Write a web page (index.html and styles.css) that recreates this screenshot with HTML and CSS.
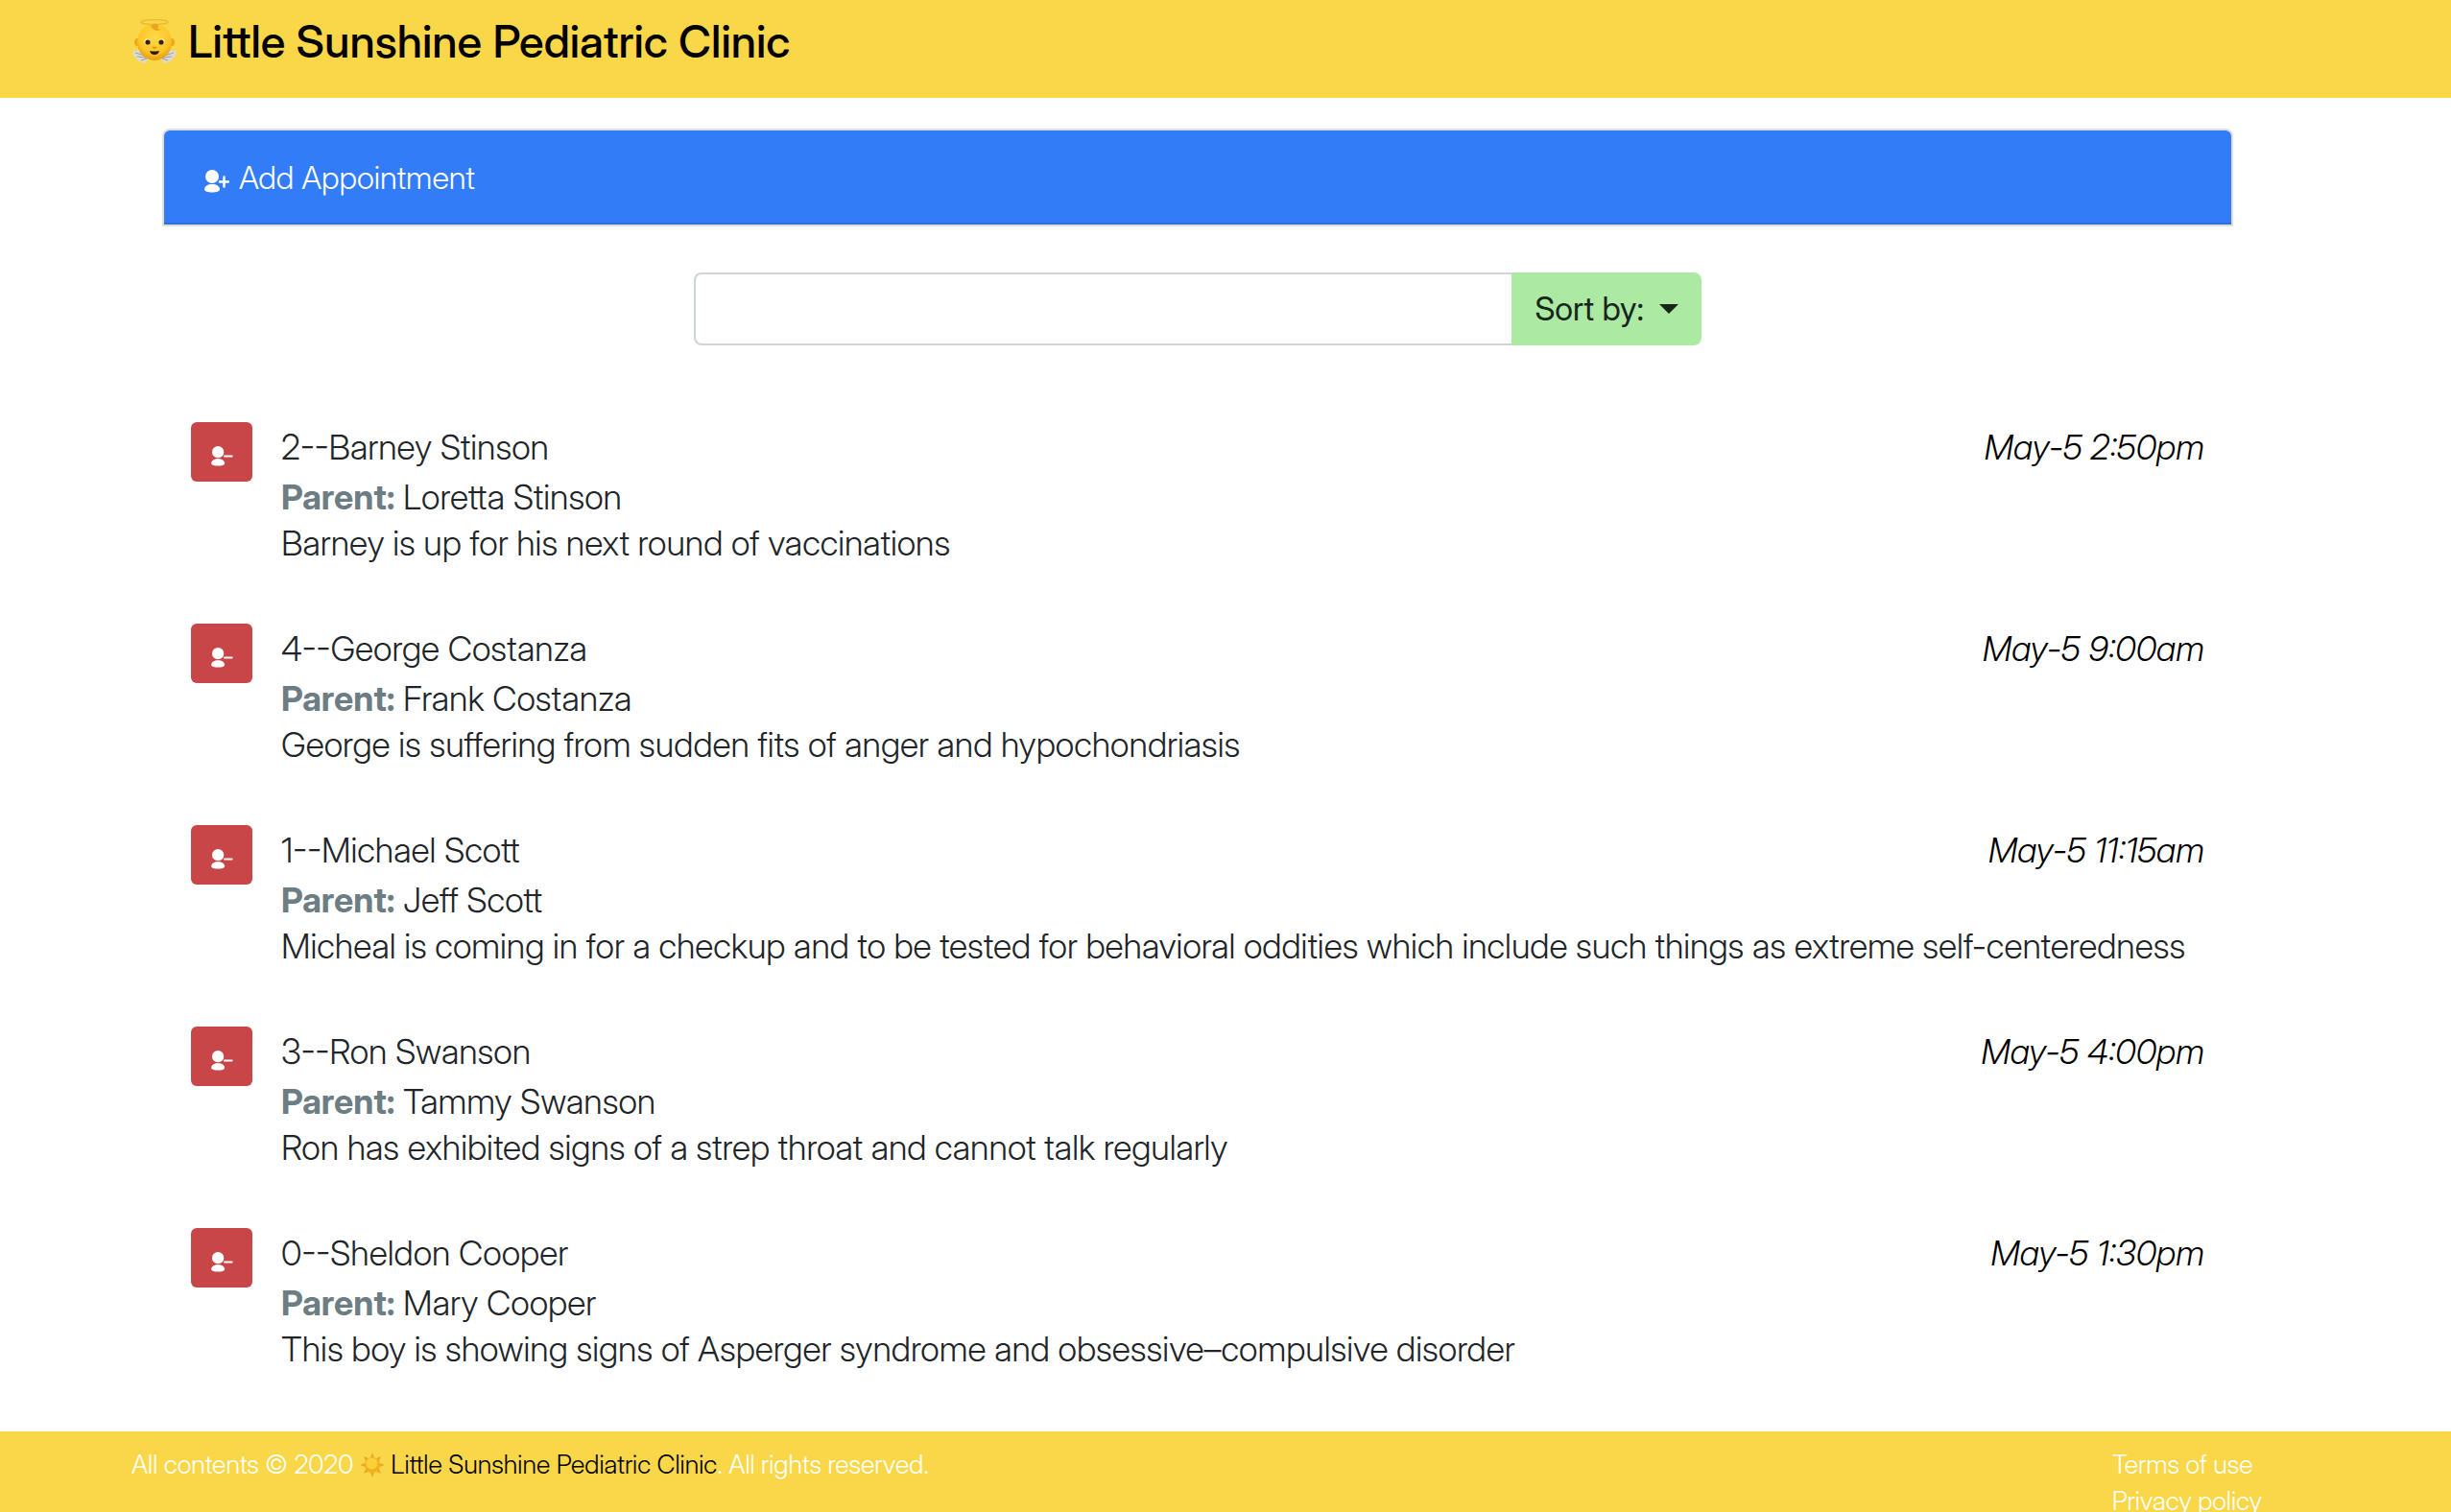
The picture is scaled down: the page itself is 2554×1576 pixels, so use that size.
FILE: index.html
```html
<!DOCTYPE html>
<html lang="en">
<head>
<meta charset="utf-8">
<title>Little Sunshine Pediatric Clinic</title>
<link rel="stylesheet" href="styles.css">
</head>
<body>
<svg class="sprite" aria-hidden="true">
  <symbol id="person" viewBox="0 0 26 24">
    <circle cx="8" cy="7" r="7"/>
    <path d="M0 20.5C0 17 3.5 15 8 15s8 2 8 5.500c0 2-3.500 3-8 3s-8-1-8-3z"/>
  </symbol>
</svg>
<header class="site-header">
  <div class="container brand">
    <svg class="angel" viewBox="0 0 48 46" aria-hidden="true">
      <defs>
        <radialGradient id="face" cx=".5" cy=".35" r=".65"><stop offset="0" stop-color="#ffd94a"/><stop offset=".7" stop-color="#fcc526"/><stop offset="1" stop-color="#e69a12"/></radialGradient>
      </defs>
      <path d="M1 33c5-1 11-1 15 2l5 6-5 2-2 3-3-1-2-1-3-1-1-3-3-2z" fill="#dcdad6"/>
      <path d="M47 33c-5-1-11-1-15 2l-5 6 5 2 2 3 3-1 2-1 3-1 1-3 3-2z" fill="#dcdad6"/>
      <path d="M4 35l10 3M6 39l9 1M10 43l6-2M44 35l-10 3M42 39l-9 1M38 43l-6-2" stroke="#a4a19c" fill="none"/>
      <ellipse cx="6" cy="24" rx="3" ry="4" fill="#eda91b"/><ellipse cx="42" cy="24" rx="3" ry="4" fill="#eda91b"/>
      <ellipse cx="24" cy="24" rx="18" ry="19" fill="url(#face)"/>
      <ellipse cx="24" cy="3" rx="14" ry="2.500" fill="none" stroke="#edbd30" stroke-width="1.500"/>
      <path d="M20 7c3-4 9-2 8 1-1 2-3 0-2-1 1 3 2 4 5 3-4 4-9 1-11-3z" fill="#e8a61b"/>
      <circle cx="16.500" cy="23.500" r="3" fill="#fff4c5"/><circle cx="31.500" cy="23.500" r="3" fill="#fff4c5"/>
      <circle cx="17" cy="24" r="2.600" fill="#38200b"/><circle cx="31" cy="24" r="2.600" fill="#38200b"/>
      <path d="M22 29q2 2 4 0" stroke="#e08d15" stroke-width="1.500" fill="none"/>
      <path d="M19 33q5 1 10 0-1 4-5 4t-5-4z" fill="#2c1607"/>
    </svg>
    <h1 class="brand-name">Little Sunshine Pediatric Clinic</h1>
  </div>
</header>
<main class="container content">
  <button class="add-bar" type="button">
    <svg class="person-icon" viewBox="0 0 26 24" aria-hidden="true"><use href="#person"/><path d="M20.500 7.500v10M16 12.500h9" class="stroke"/></svg>
    Add Appointment
  </button>
  <form class="search">
    <input class="search-input" type="text" aria-label="Search appointments">
    <button class="sort-button" type="button">Sort by: <span class="caret"></span></button>
  </form>
  <div class="appointments">
    <article class="appointment">
      <button class="remove" type="button" aria-label="Remove"><svg class="person-icon" viewBox="0 0 26 24" aria-hidden="true"><use href="#person"/><path d="M16 12h8.500" class="stroke"/></svg></button>
      <div class="details">
        <div class="heading"><span>2--Barney Stinson</span><em class="date">May-5 2:50pm</em></div>
        <div class="parent"><b class="label">Parent:</b> Loretta Stinson</div>
        <div class="note">Barney is up for his next round of vaccinations</div>
      </div>
    </article>
    <article class="appointment">
      <button class="remove" type="button" aria-label="Remove"><svg class="person-icon" viewBox="0 0 26 24" aria-hidden="true"><use href="#person"/><path d="M16 12h8.500" class="stroke"/></svg></button>
      <div class="details">
        <div class="heading"><span>4--George Costanza</span><em class="date">May-5 9:00am</em></div>
        <div class="parent"><b class="label">Parent:</b> Frank Costanza</div>
        <div class="note">George is suffering from sudden fits of anger and hypochondriasis</div>
      </div>
    </article>
    <article class="appointment">
      <button class="remove" type="button" aria-label="Remove"><svg class="person-icon" viewBox="0 0 26 24" aria-hidden="true"><use href="#person"/><path d="M16 12h8.500" class="stroke"/></svg></button>
      <div class="details">
        <div class="heading"><span>1--Michael Scott</span><em class="date">May-5 11:15am</em></div>
        <div class="parent"><b class="label">Parent:</b> Jeff Scott</div>
        <div class="note">Micheal is coming in for a checkup and to be tested for behavioral oddities which include such things as extreme self-centeredness</div>
      </div>
    </article>
    <article class="appointment">
      <button class="remove" type="button" aria-label="Remove"><svg class="person-icon" viewBox="0 0 26 24" aria-hidden="true"><use href="#person"/><path d="M16 12h8.500" class="stroke"/></svg></button>
      <div class="details">
        <div class="heading"><span>3--Ron Swanson</span><em class="date">May-5 4:00pm</em></div>
        <div class="parent"><b class="label">Parent:</b> Tammy Swanson</div>
        <div class="note">Ron has exhibited signs of a strep throat and cannot talk regularly</div>
      </div>
    </article>
    <article class="appointment">
      <button class="remove" type="button" aria-label="Remove"><svg class="person-icon" viewBox="0 0 26 24" aria-hidden="true"><use href="#person"/><path d="M16 12h8.500" class="stroke"/></svg></button>
      <div class="details">
        <div class="heading"><span>0--Sheldon Cooper</span><em class="date">May-5 1:30pm</em></div>
        <div class="parent"><b class="label">Parent:</b> Mary Cooper</div>
        <div class="note">This boy is showing signs of Asperger syndrome and obsessive–compulsive disorder</div>
      </div>
    </article>
  </div>
</main>
<footer class="site-footer">
  <div class="container footer-row">
    <p class="copyright">All contents © 2020
      <svg class="sun" viewBox="0 0 26 26" aria-hidden="true"><path d="M13 0l2 5h-4zM13 26l2-5h-4zM0 13l5-2v4zM26 13l-5-2v4zM4 4l5 2-3 3zM22 4l-5 2 3 3zM4 22l5-2-3-3zM22 22l-5-2 3-3z" fill="#e8ab25"/><circle cx="13" cy="13" r="8" fill="#f5ae1c"/><circle cx="12.500" cy="11.500" r="6" fill="#fcd03a"/></svg>
      <a class="clinic-link" href="#">Little Sunshine Pediatric Clinic</a>. All rights reserved.</p>
    <nav class="footer-links"><a href="#">Terms of use</a><a href="#">Privacy policy</a></nav>
  </div>
</footer>
</body>
</html>
```
FILE: styles.css
```css
* { box-sizing: border-box; }
body {
  margin: 0;
  background: #fff;
  color: #212529;
  font: 300 36px/48px "Inter Display", Inter, "Liberation Sans", sans-serif;
}
button, input { font: inherit; margin: 0; }
.sprite { display: none; }
.container { max-width: 2280px; margin: 0 auto; }

.site-header { background: #fad748; padding: 13px 0 29px; }
.brand { display: flex; align-items: center; gap: 11px; }
.angel { width: 48px; height: 46px; }
.brand-name { margin: 0; color: #000; font-size: 47px; font-weight: 500; line-height: 60px; }

.content { padding: 32px 90px 2px 32px; }
.add-bar {
  display: flex;
  align-items: center;
  gap: 10px;
  width: 100%;
  padding: 24px 42px;
  border: 2px solid #dfdfdf;
  border-radius: 8px 8px 0 0;
  box-shadow: inset 0 -2px #2c6fde;
  background: #327cf8;
  color: #fff;
  font-size: 33px;
  line-height: 50px;
}
.person-icon { width: 26px; height: 24px; fill: currentColor; }
.add-bar .person-icon { margin-top: 8px; }
.stroke { fill: none; stroke: currentColor; stroke-width: 2.500; stroke-linecap: round; }

.search { display: flex; width: 1050px; max-width: 100%; margin: 48px auto 80px; }
.search-input {
  flex: 1;
  min-width: 0;
  height: 76px;
  padding: 12px 24px;
  border: 2px solid #ced4da;
  border-right: 0;
  border-radius: 8px 0 0 8px;
  background: #fff;
}
.sort-button {
  display: flex;
  align-items: center;
  gap: 16px;
  padding: 0 24px;
  border: 0;
  border-radius: 0 8px 8px 0;
  background: #ace9a3;
  color: #17251a;
  font-size: 34px;
  font-weight: 400;
}
.caret { border: 10px solid transparent; border-top-color: currentColor; border-bottom: 0; }

.appointments { padding: 0 30px; }
.appointment { display: flex; align-items: flex-start; gap: 30px; padding-bottom: 60px; }
.remove {
  display: flex;
  align-items: center;
  justify-content: center;
  width: 64px;
  height: 62px;
  padding: 8px 0 0;
  border: 0;
  border-radius: 6px;
  background: #c94648;
  color: #fff;
}
.remove .person-icon { width: 23px; height: 21px; }
.details { flex: 1; min-width: 0; }
.heading { display: flex; justify-content: space-between; margin-bottom: 2px; line-height: 52px; }
.date { color: #000; }
.label { color: #6c7d84; font-weight: 700; }

.site-footer { background: #fad748; color: #fff; font-size: 27px; line-height: 38px; padding-top: 16px; }
.footer-row { display: flex; justify-content: space-between; padding-right: 60px; }
.copyright { margin: 0; }
.sun { width: 26px; height: 26px; vertical-align: -4px; }
.site-footer a { color: inherit; text-decoration: none; }
.site-footer .clinic-link { color: #000; }
.footer-links { display: flex; flex-direction: column; }
```
